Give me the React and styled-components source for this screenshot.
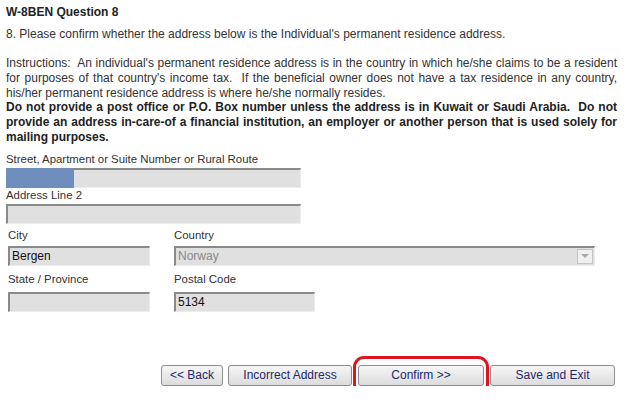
import React from "react";
import styled, { createGlobalStyle } from "styled-components";

const GlobalStyle = createGlobalStyle`
  body {
    margin: 0;
    background: #fff;
    font-family: "Liberation Sans", Arial, sans-serif;
    font-size: 12px;
    color: #333;
  }
`;

const Page = styled.div`
  width: 611px;
  padding: 5px 13px 0 6px;
`;

const Title = styled.h1`
  margin: 0;
  font-size: 12px;
  line-height: 14px;
  font-weight: bold;
  color: #222;
`;

const Question = styled.p`
  margin: 8px 0 0;
  line-height: 14px;
`;

const Instructions = styled.p`
  margin: 15px 0 0;
  line-height: 14.8px;
  text-align: justify;
  & strong {
    color: #222;
  }
`;

const Field = styled.div`
  display: flex;
  flex-direction: column;
  margin-top: ${p => p.$top || 0}px;
`;

const Label = styled.label`
  font-size: 11.4px;
  line-height: 14px;
  margin-bottom: ${p => p.$gap || 3}px;
`;

const Input = styled.div`
  box-sizing: border-box;
  width: ${p => p.$width}px;
  height: 20px;
  background: #e0e0e0;
  border-top: 2px solid #8a8a8a;
  border-left: 2px solid #8a8a8a;
  border-right: 1px solid #ececec;
  border-bottom: 1px solid #ececec;
  position: relative;
  padding-left: 2px;
  line-height: 17px;
  color: ${p => (p.$muted ? "#8a8a8a" : "#111")};
  font-size: 12px;
`;

const Selection = styled.span`
  position: absolute;
  left: -2px;
  top: -2px;
  bottom: -1px;
  width: 68px;
  background: #6e8fbd;
`;

const Arrow = styled.span`
  position: absolute;
  right: 1px;
  top: 1px;
  bottom: 1px;
  width: 14px;
  border: 1px solid #c4c4c4;
  background: #f0f0f0;
  display: flex;
  align-items: center;
  justify-content: center;
  &::after {
    content: "";
    border-left: 4px solid transparent;
    border-right: 4px solid transparent;
    border-top: 4px solid #a8a8a8;
  }
`;

const Row = styled.div`
  display: grid;
  grid-template-columns: 166px auto;
  padding-left: 2px;
  margin-top: ${p => p.$top || 0}px;
`;

const Buttons = styled.div`
  display: flex;
  justify-content: flex-end;
  gap: 6px;
  margin-top: 53px;
  padding-right: 2px;
`;

const Button = styled.button`
  box-sizing: border-box;
  width: ${p => p.$width}px;
  height: 21px;
  border: 1px solid #8c8c8c;
  border-radius: 3px;
  background: linear-gradient(#f6f6f6, #dcdcdc);
  font-family: "Liberation Sans", Arial, sans-serif;
  font-size: 12px;
  color: #1f2a6e;
  padding: 0;
  margin-left: ${p => p.$left || 0}px;
  position: relative;
`;

const Highlight = styled.span`
  position: absolute;
  left: -6px;
  right: -6px;
  top: -10px;
  bottom: -10px;
  border: 3px solid #e0141e;
  border-radius: 11px;
  pointer-events: none;
`;

export default function App() {
  return (
    <Page>
      <GlobalStyle />
      <Title>W-8BEN Question 8</Title>
      <Question>
        8. Please confirm whether the address below is the Individual's permanent residence address.
      </Question>
      <Instructions>
        Instructions:&nbsp; An individual's permanent residence address is in the country in which
        he/she claims to be a resident for purposes of that country's income tax.&nbsp; If the
        beneficial owner does not have a tax residence in any country, his/her permanent residence
        address is where he/she normally resides.
        <br />
        <strong>
          Do not provide a post office or P.O. Box number unless the address is in Kuwait or Saudi
          Arabia.&nbsp; Do not provide an address in-care-of a financial institution, an employer or
          another person that is used solely for mailing purposes.
        </strong>
      </Instructions>

      <Field $top={7}>
        <Label $gap={2}>Street, Apartment or Suite Number or Rural Route</Label>
        <Input $width={295}>
          <Selection />
        </Input>
      </Field>
      <Field>
        <Label $gap={2}>Address Line 2</Label>
        <Input $width={295} />
      </Field>

      <Row $top={4}>
        <Label $gap={4}>City</Label>
        <Label $gap={4}>Country</Label>
        <Input $width={142}>Bergen</Input>
        <Input $width={421} $muted>
          Norway
          <Arrow />
        </Input>
      </Row>
      <Row $top={6}>
        <Label $gap={6}>State / Province</Label>
        <Label $gap={6}>Postal Code</Label>
        <Input $width={142} />
        <Input $width={141}>5134</Input>
      </Row>

      <Buttons>
        <Button $width={62}>&lt;&lt; Back</Button>
        <Button $width={124} $left={-1}>Incorrect Address</Button>
        <Button $width={126}>
          Confirm &gt;&gt;
          <Highlight />
        </Button>
        <Button $width={125}>Save and Exit</Button>
      </Buttons>
    </Page>
  );
}
